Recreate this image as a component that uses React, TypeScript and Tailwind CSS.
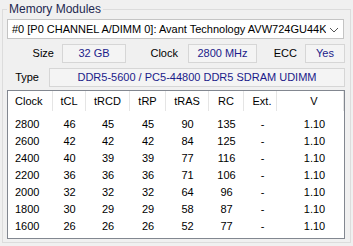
import { Fragment } from 'react';

const cols = [
  { name: 'Clock', w: 'w-[45px]', align: 'text-left pl-[7px]' },
  { name: 'tCL', w: 'w-[33px]', align: 'text-center' },
  { name: 'tRCD', w: 'w-[44px]', align: 'text-center' },
  { name: 'tRP', w: 'w-[36px]', align: 'text-center' },
  { name: 'tRAS', w: 'w-[43px]', align: 'text-center' },
  { name: 'RC', w: 'w-[35px]', align: 'text-center' },
  { name: 'Ext.', w: 'w-[33px]', align: 'text-center pl-[4px]' },
  { name: 'V', w: 'w-[67px]', align: 'text-center pl-[8px]' },
];

const rows = [
  ['2800', '46', '45', '45', '90', '135', '-', '1.10'],
  ['2600', '42', '42', '42', '84', '125', '-', '1.10'],
  ['2400', '40', '39', '39', '77', '116', '-', '1.10'],
  ['2200', '36', '36', '36', '71', '106', '-', '1.10'],
  ['2000', '32', '32', '32', '64', '96', '-', '1.10'],
  ['1800', '30', '29', '29', '58', '87', '-', '1.10'],
  ['1600', '26', '26', '26', '52', '77', '-', '1.10'],
];

function ValueBox({ value, width }: { value: string; width: string }) {
  return (
    <div className={`${width} h-[19px] flex items-center justify-center border border-[#d6d6d6] bg-[#f4f4f4] text-[#1b1b8a]`}>
      {value}
    </div>
  );
}

export default function App() {
  return (
    <div className="w-[353px] h-[246px] bg-[#f0f0f0] pt-[2px] px-[2px] text-[11px] leading-[13px] text-black font-['Liberation_Sans',Arial,sans-serif] overflow-hidden">
      <fieldset className="w-[349px] h-[241px] border border-[#dcdcdc] px-[4px]">
        <legend className="px-[2px] text-[12px] leading-[14px] text-[#1e2850]">Memory Modules</legend>

        <div className="mt-[3px] h-[20px] w-[337px] flex items-center border border-[#c4c4c4] bg-white">
          <span className="flex-1 pl-[4px] whitespace-nowrap overflow-hidden">
            #0 [P0 CHANNEL A/DIMM 0]: Avant Technology AVW724GU44K65
          </span>
          <svg width="17" height="18" viewBox="0 0 17 18" className="shrink-0">
            <path d="M4 8 L8 12 L12 8" fill="none" stroke="#555" strokeWidth="1" />
          </svg>
        </div>

        <div className="mt-[5px] flex items-center">
          <span className="w-[47px] text-right">Size</span>
          <div className="ml-[8px]">
            <ValueBox value="32 GB" width="w-[64px]" />
          </div>
          <span className="w-[52px] text-right">Clock</span>
          <div className="ml-[10px]">
            <ValueBox value="2800 MHz" width="w-[69px]" />
          </div>
          <span className="w-[40px] text-right">ECC</span>
          <div className="ml-[8px]">
            <ValueBox value="Yes" width="w-[40px]" />
          </div>
        </div>

        <div className="mt-[5px] flex items-center">
          <span className="w-[32px] text-right">Type</span>
          <div className="ml-[10px]">
            <ValueBox value="DDR5-5600 / PC5-44800 DDR5 SDRAM UDIMM" width="w-[296px]" />
          </div>
        </div>

        <div className="mt-[3px] w-[338px] h-[149px] border border-[#828790] bg-white overflow-hidden">
          <div className="flex h-[20px] items-center">
            {cols.map((c, i) => (
              <div
                key={c.name}
                className={`${c.w} ${c.align} h-full flex items-center ${i === 0 ? 'justify-start' : 'justify-center'} border-r border-[#e5e5e5] shrink-0`}
              >
                {c.name}
              </div>
            ))}
          </div>
          <div className="pt-[5px]">
            {rows.map((r) => (
              <div key={r[0]} className="flex h-[17px] items-center">
                {r.map((v, i) => (
                  <Fragment key={i}>
                    <div className={`${cols[i].w} ${cols[i].align} shrink-0`}>{v}</div>
                  </Fragment>
                ))}
              </div>
            ))}
          </div>
        </div>
      </fieldset>
    </div>
  );
}
